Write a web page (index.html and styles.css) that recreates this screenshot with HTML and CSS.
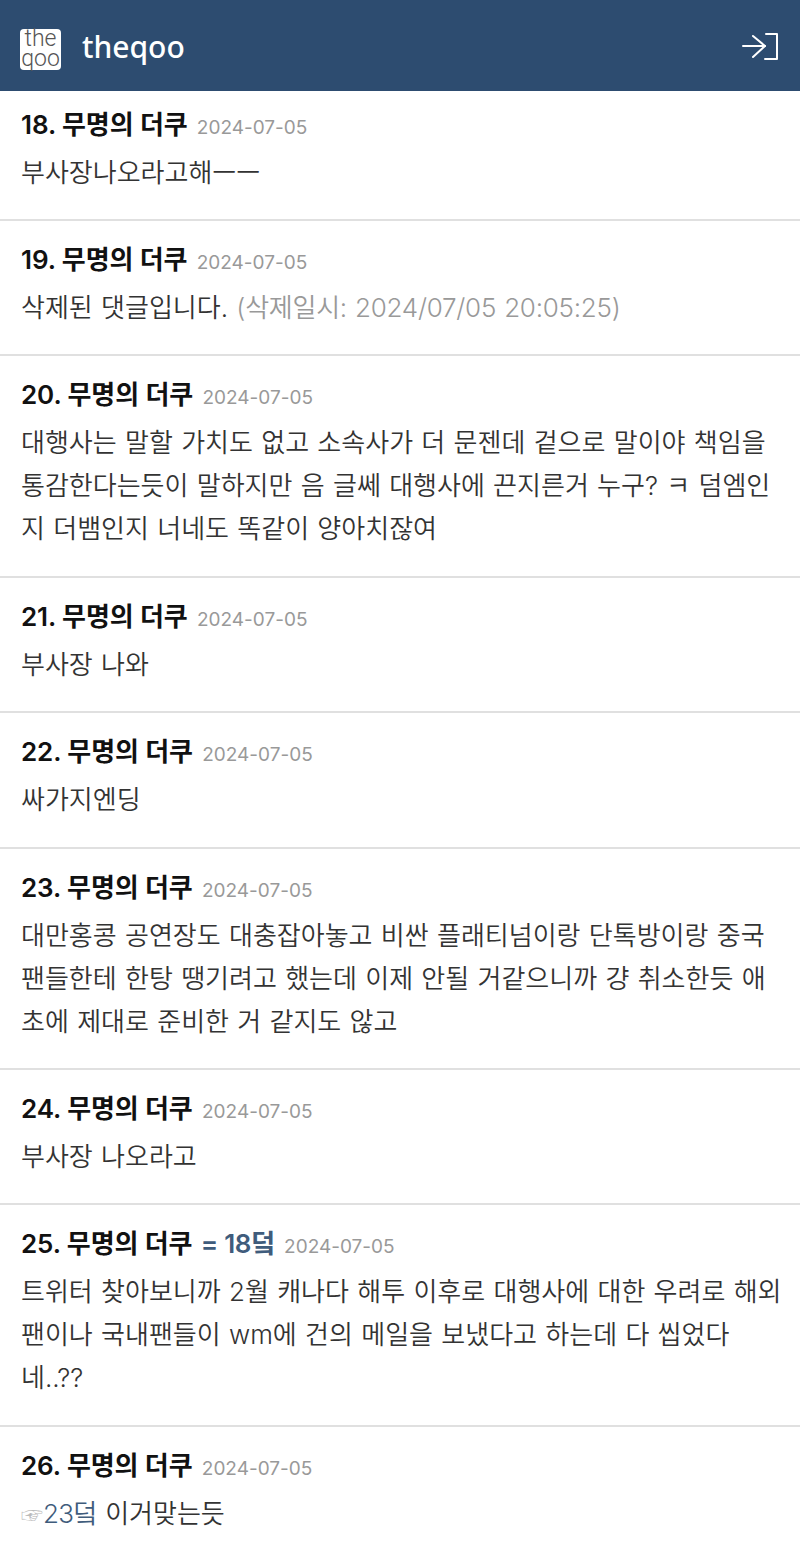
FILE: index.html
```html
<!DOCTYPE html>
<html lang="ko">
<head>
    <meta charset="UTF-8">
    <meta name="viewport" content="width=device-width, initial-scale=1.0">
    <title>theqoo</title>
    <link rel="stylesheet" href="styles.css">
</head>
<body>
    <header class="topbar">
        <div class="logo">the<br>qoo</div>
        <div class="site-name">theqoo</div>
        <svg class="login-icon" width="36" height="27" viewBox="0 0 36 27" fill="none" stroke="#fff" stroke-width="2" stroke-linecap="round" stroke-linejoin="round">
            <path d="M1 13H23"/>
            <path d="M11 3L23 13L11 24"/>
            <path d="M24 1H35V26H23"/>
        </svg>
    </header>

    <ul class="comments">
        <li class="comment first">
            <div class="meta"><b>18. 무명의 더쿠</b> <span class="date">2024-07-05</span></div>
            <p>부사장나오라고해ㅡㅡ</p>
        </li>
        <li class="comment">
            <div class="meta"><b>19. 무명의 더쿠</b> <span class="date">2024-07-05</span></div>
            <p>삭제된 댓글입니다. <span class="deleted">(삭제일시: 2024/07/05 20:05:25)</span></p>
        </li>
        <li class="comment">
            <div class="meta"><b>20. 무명의 더쿠</b> <span class="date">2024-07-05</span></div>
            <p>대행사는 말할 가치도 없고 소속사가 더 문젠데 겉으로 말이야 책임을 통감한다는듯이 말하지만 음 글쎄 대행사에 끈지른거 누구? ㅋ 덤엠인지 더뱀인지 너네도 똑같이 양아치잖여</p>
        </li>
        <li class="comment">
            <div class="meta"><b>21. 무명의 더쿠</b> <span class="date">2024-07-05</span></div>
            <p>부사장 나와</p>
        </li>
        <li class="comment">
            <div class="meta"><b>22. 무명의 더쿠</b> <span class="date">2024-07-05</span></div>
            <p>싸가지엔딩</p>
        </li>
        <li class="comment">
            <div class="meta"><b>23. 무명의 더쿠</b> <span class="date">2024-07-05</span></div>
            <p>대만홍콩 공연장도 대충잡아놓고 비싼 플래티넘이랑 단톡방이랑 중국팬들한테 한탕 땡기려고 했는데 이제 안될 거같으니까 걍 취소한듯 애초에 제대로 준비한 거 같지도 않고</p>
        </li>
        <li class="comment">
            <div class="meta"><b>24. 무명의 더쿠</b> <span class="date">2024-07-05</span></div>
            <p>부사장 나오라고</p>
        </li>
        <li class="comment">
            <div class="meta"><b>25. 무명의 더쿠</b> <span class="same">= 18덬</span> <span class="date">2024-07-05</span></div>
            <p>트위터 찾아보니까 2월 캐나다 해투 이후로 대행사에 대한 우려로 해외팬이나 국내팬들이 wm에 건의 메일을 보냈다고 하는데 다 씹었다네..??</p>
        </li>
        <li class="comment">
            <div class="meta"><b>26. 무명의 더쿠</b> <span class="date">2024-07-05</span></div>
            <p><span class="finger">☞</span><span class="reply">23덬</span> 이거맞는듯</p>
        </li>
    </ul>
</body>
</html>
```

FILE: styles.css
```css
body {
    margin: 0;
    background: #fff;
    font-family: Inter, "Noto Sans CJK KR", sans-serif;
    color: #222;
    overflow: hidden;
}

.topbar {
    display: flex;
    align-items: center;
    height: 91px;
    padding: 0 22px 0 20px;
    background: #2d4c70;
}

.logo {
    align-self: flex-start;
    margin-top: 29px;
    width: 41px;
    height: 41px;
    border-radius: 4px;
    background: #fff;
    color: #555;
    font-family: Roboto, sans-serif;
    font-size: 23px;
    line-height: 20px;
    font-weight: 300;
    text-align: center;
}

.site-name {
    flex: 1;
    margin: 2px 0 0 21px;
    color: #fff;
    font-family: "Noto Sans", sans-serif;
    font-size: 30px;
    font-weight: 500;
}

.login-icon {
    margin-top: 2px;
}

.comments {
    list-style: none;
    margin: 0;
    padding: 0;
}

.comment {
    padding: 21px 15px 25.4px 21px;
    border-bottom: 2px solid #e0e0e0;
}

.comment.first {
    padding-top: 16px;
    padding-bottom: 25px;
}

.meta {
    height: 36px;
    line-height: 36px;
    font-size: 26px;
    color: #111;
    white-space: nowrap;
}

.meta b {
    font-weight: 600;
    letter-spacing: -0.1px;
}

.date {
    margin-left: 2px;
    font-size: 19px;
    color: #999;
}

.same {
    margin-left: 1px;
    color: #3f5c7c;
    font-weight: 600;
    letter-spacing: -0.3px;
}

.comment p {
    margin: 8px 0 0;
    font-size: 26px;
    font-weight: 350;
    line-height: 43px;
    color: #333;
    word-spacing: 1px;
}

.deleted {
    color: #999;
    letter-spacing: -0.25px;
}

.finger {
    color: #bbb;
    font-size: 22px;
}

.reply {
    color: #3f5c7c;
    letter-spacing: -0.6px;
}
```
